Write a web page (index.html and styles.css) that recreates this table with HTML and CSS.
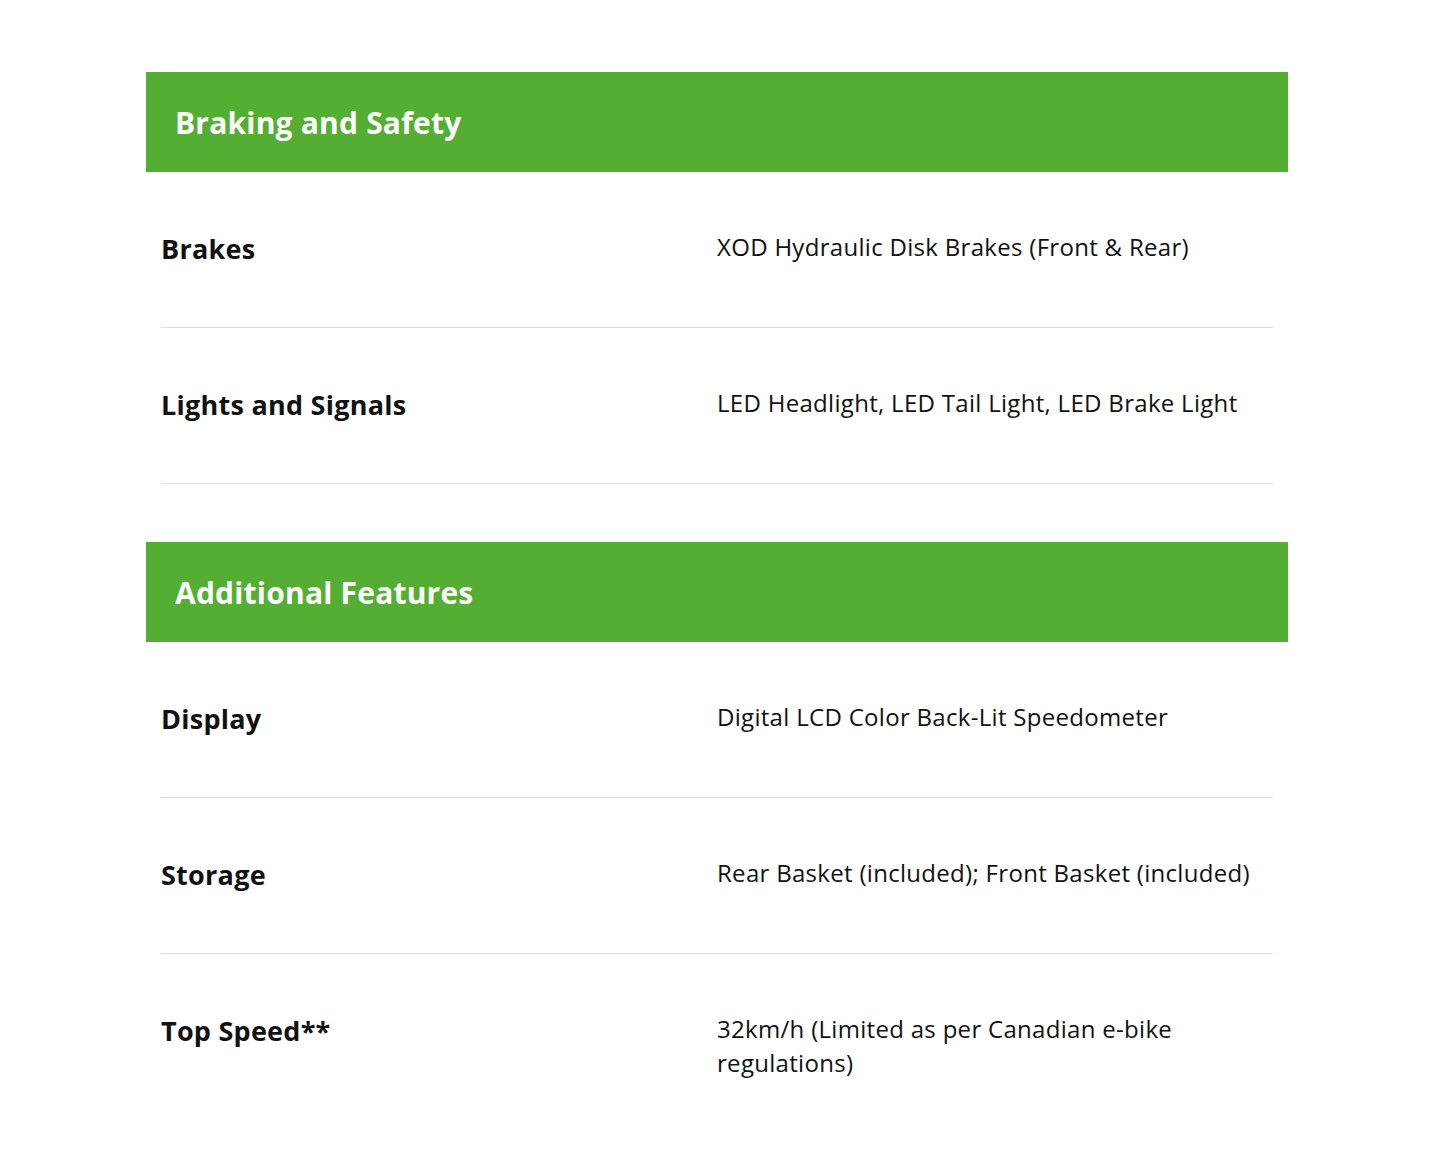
FILE: index.html
```html
<!DOCTYPE html>
<html>
<head>
<meta charset="utf-8">
<link rel="stylesheet" href="styles.css">
</head>
<body>
<div class="specs">
  <section class="group">
    <h2 class="group-title">Braking and Safety</h2>
    <div class="row"><div class="label">Brakes</div><div class="value">XOD Hydraulic Disk Brakes (Front &amp; Rear)</div></div>
    <div class="row"><div class="label">Lights and Signals</div><div class="value">LED Headlight, LED Tail Light, LED Brake Light</div></div>
  </section>
  <section class="group">
    <h2 class="group-title">Additional Features</h2>
    <div class="row"><div class="label">Display</div><div class="value">Digital LCD Color Back-Lit Speedometer</div></div>
    <div class="row"><div class="label">Storage</div><div class="value">Rear Basket (included); Front Basket (included)</div></div>
    <div class="row last"><div class="label">Top Speed**</div><div class="value">32km/h (Limited as per Canadian e-bike regulations)</div></div>
  </section>
</div>
</body>
</html>
```
FILE: styles.css
```css
html, body {
  margin: 0;
  padding: 0;
  background: #fff;
}
body {
  font-family: "Open Sans", "Lato", sans-serif;
  color: #111;
}
.specs {
  width: 1142px;
  margin-left: 146px;
  padding-top: 72px;
}
.group + .group {
  margin-top: 58px;
}
.group-title {
  margin: 0;
  height: 100px;
  box-sizing: border-box;
  padding-left: 29px;
  display: flex;
  align-items: center;
  background: #54ae33;
  color: #fff;
  font-size: 30px;
  font-weight: 700;
  letter-spacing: 0.2px;
}
.row {
  margin: 0 15px;
  display: grid;
  grid-template-columns: 556px 1fr;
  align-items: start;
  padding: 58px 0 59px;
  border-bottom: 1px solid #dedede;
}
.row.last {
  border-bottom: none;
}
.label {
  font-size: 27px;
  line-height: 38px;
  font-weight: 700;
  letter-spacing: 0.25px;
}
.value {
  font-size: 24px;
  line-height: 34px;
  font-weight: 400;
  letter-spacing: 0.3px;
}
```
